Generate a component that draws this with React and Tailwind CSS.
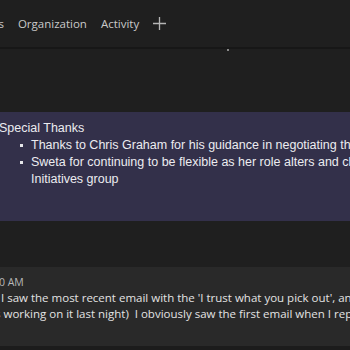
export default function App() {
  return (
    <div className="relative h-[350px] w-[350px] overflow-hidden bg-[#1f1f1f]">
      {/* tab bar */}
      <div className="flex h-[47px] items-center gap-[14px] pt-[1px] text-[11.5px] text-[#c9c9c9] [font-family:'Open_Sans',sans-serif]">
        <span className="-ml-[25px]">Posts</span>
        <span>Organization</span>
        <span>Activity</span>
        <svg width="13" height="13" viewBox="0 0 13 13" className="-mt-[2px] text-[#b5b5b5]">
          <path d="M6.5 0v13M0 6.5h13" stroke="currentColor" strokeWidth="1.3" />
        </svg>
      </div>
      <div className="h-[2px] bg-[#171717]" />

      <div className="relative h-[63px]">
        <span className="absolute left-[227px] top-0 h-[2px] w-[2px] bg-[#8a8a8a]" />
      </div>

      {/* purple note */}
      <div className="h-[109px] bg-[#33304a] pt-[8px] text-[12.5px] leading-[17px] text-[#ececf0] [font-family:'Liberation_Sans',Arial,sans-serif]">
        <div className="-ml-[1px] whitespace-nowrap">Special Thanks</div>
        <ul className="pl-[31px]">
          <li className="relative whitespace-nowrap">
            <span className="absolute -left-[11px] top-[7px] h-[3px] w-[3px] bg-[#e6e6ea]" />
            Thanks to Chris Graham for his guidance in negotiating the contract
          </li>
          <li className="relative">
            <span className="absolute -left-[11px] top-[7px] h-[3px] w-[3px] bg-[#e6e6ea]" />
            <span className="block whitespace-nowrap">Sweta for continuing to be flexible as her role alters and changes</span>
            <span className="block whitespace-nowrap">Initiatives group</span>
          </li>
        </ul>
      </div>

      <div className="h-[46px]" />

      {/* message */}
      <div className="h-[79px] bg-[#292929] pt-[8px] text-[#e3e3e3] [font-family:'Open_Sans',sans-serif]">
        <div className="-ml-[7px] text-[10.5px] leading-[15px] text-[#b8b8b8]">10 AM</div>
        <div className="text-[11.5px] leading-[16px]">
          <div className="ml-[1px] whitespace-nowrap">I saw the most recent email with the 'I trust what you pick out', and then</div>
          <div className="-ml-[5px] whitespace-nowrap">s working on it last night)&nbsp; I obviously saw the first email when I replied</div>
        </div>
      </div>
      <div className="h-[4px] bg-[#1c1c1c]" />
    </div>
  );
}
